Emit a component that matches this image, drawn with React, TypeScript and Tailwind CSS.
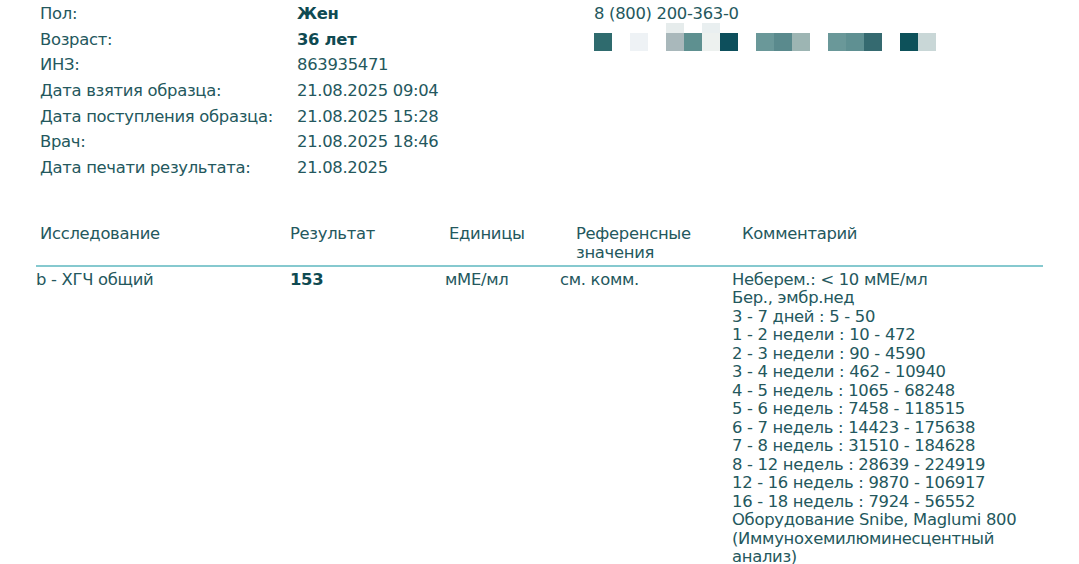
const INFO: [string, string, boolean][] = [
  ["Пол:", "Жен", true],
  ["Возраст:", "36 лет", true],
  ["ИНЗ:", "863935471", false],
  ["Дата взятия образца:", "21.08.2025 09:04", false],
  ["Дата поступления образца:", "21.08.2025 15:28", false],
  ["Врач:", "21.08.2025 18:46", false],
  ["Дата печати результата:", "21.08.2025", false],
];

// blurred contact block
const PIXELS: { c: string; top?: string }[] = [
  { c: "#2f6b6e" },
  { c: "#ffffff" },
  { c: "#eef2f5" },
  { c: "#ffffff" },
  { c: "#a9b8bb", top: "#e6ecec" },
  { c: "#5e9090" },
  { c: "#edf1ef", top: "#e9eff0" },
  { c: "#0d4f5c" },
  { c: "#ffffff" },
  { c: "#6a9899" },
  { c: "#5a8a8d" },
  { c: "#9db5b3" },
  { c: "#ffffff" },
  { c: "#6a9899" },
  { c: "#5f9092" },
  { c: "#356a70" },
  { c: "#ffffff" },
  { c: "#0d515a" },
  { c: "#c9d7d7" },
];

const COMMENT = [
  "Неберем.: < 10 мМЕ/мл",
  "Бер., эмбр.нед",
  "3 - 7 дней : 5 - 50",
  "1 - 2 недели : 10 - 472",
  "2 - 3 недели : 90 - 4590",
  "3 - 4 недели : 462 - 10940",
  "4 - 5 недель : 1065 - 68248",
  "5 - 6 недель : 7458 - 118515",
  "6 - 7 недель : 14423 - 175638",
  "7 - 8 недель : 31510 - 184628",
  "8 - 12 недель : 28639 - 224919",
  "12 - 16 недель : 9870 - 106917",
  "16 - 18 недель : 7924 - 56552",
  "Оборудование Snibe, Maglumi 800",
  "(Иммунохемилюминесцентный",
  "анализ)",
];

export default function App() {
  return (
    <div className="w-[1079px] h-[564px] overflow-hidden bg-white text-[#24585d] font-['DejaVu_Sans',sans-serif] text-[16.4px] tracking-[-0.3px]">
      {/* Patient info */}
      <div className="flex pl-10 pt-[1px]">
        <div className="w-[257px]">
          {INFO.map(([label]) => (
            <div key={label} className="h-[25.7px] leading-[25.7px]">{label}</div>
          ))}
        </div>
        <div className="w-[297px]">
          {INFO.map(([label, value, bold]) => (
            <div key={label} className={`h-[25.7px] leading-[25.7px] ${bold ? "font-bold text-[#0f4a52]" : ""}`}>
              {value}
            </div>
          ))}
        </div>
        <div>
          <div className="h-[25.7px] leading-[25.7px]">8 (800) 200-363-0</div>
          <div className="flex mt-[6px]">
            {PIXELS.map((p, i) => (
              <div key={i} className="relative w-[18px] h-[18px]" style={{ backgroundColor: p.c }}>
                {p.top && <div className="absolute left-0 -top-[10px] w-[18px] h-[10px]" style={{ backgroundColor: p.top }} />}
              </div>
            ))}
          </div>
        </div>
      </div>

      {/* Results table */}
      <div className="mt-[43px] w-[1043px]">
        <div className="flex pl-10 leading-[19px] pb-[3px]">
          <div className="w-[250px]">Исследование</div>
          <div className="w-[159px]">Результат</div>
          <div className="w-[127px]">Единицы</div>
          <div className="w-[166px]">Референсные<br />значения</div>
          <div>Комментарий</div>
        </div>
        <div className="ml-[36px] h-[2px] bg-[#86c9cf]" />
        <div className="flex pl-[36px] pt-[4px] leading-[18.5px]">
          <div className="w-[254px]">b - ХГЧ общий</div>
          <div className="w-[155px] font-bold text-[#0f4a52]">153</div>
          <div className="w-[115px]">мМЕ/мл</div>
          <div className="w-[172px]">см. комм.</div>
          <div>
            {COMMENT.map((line) => (
              <div key={line}>{line}</div>
            ))}
          </div>
        </div>
      </div>
    </div>
  );
}
